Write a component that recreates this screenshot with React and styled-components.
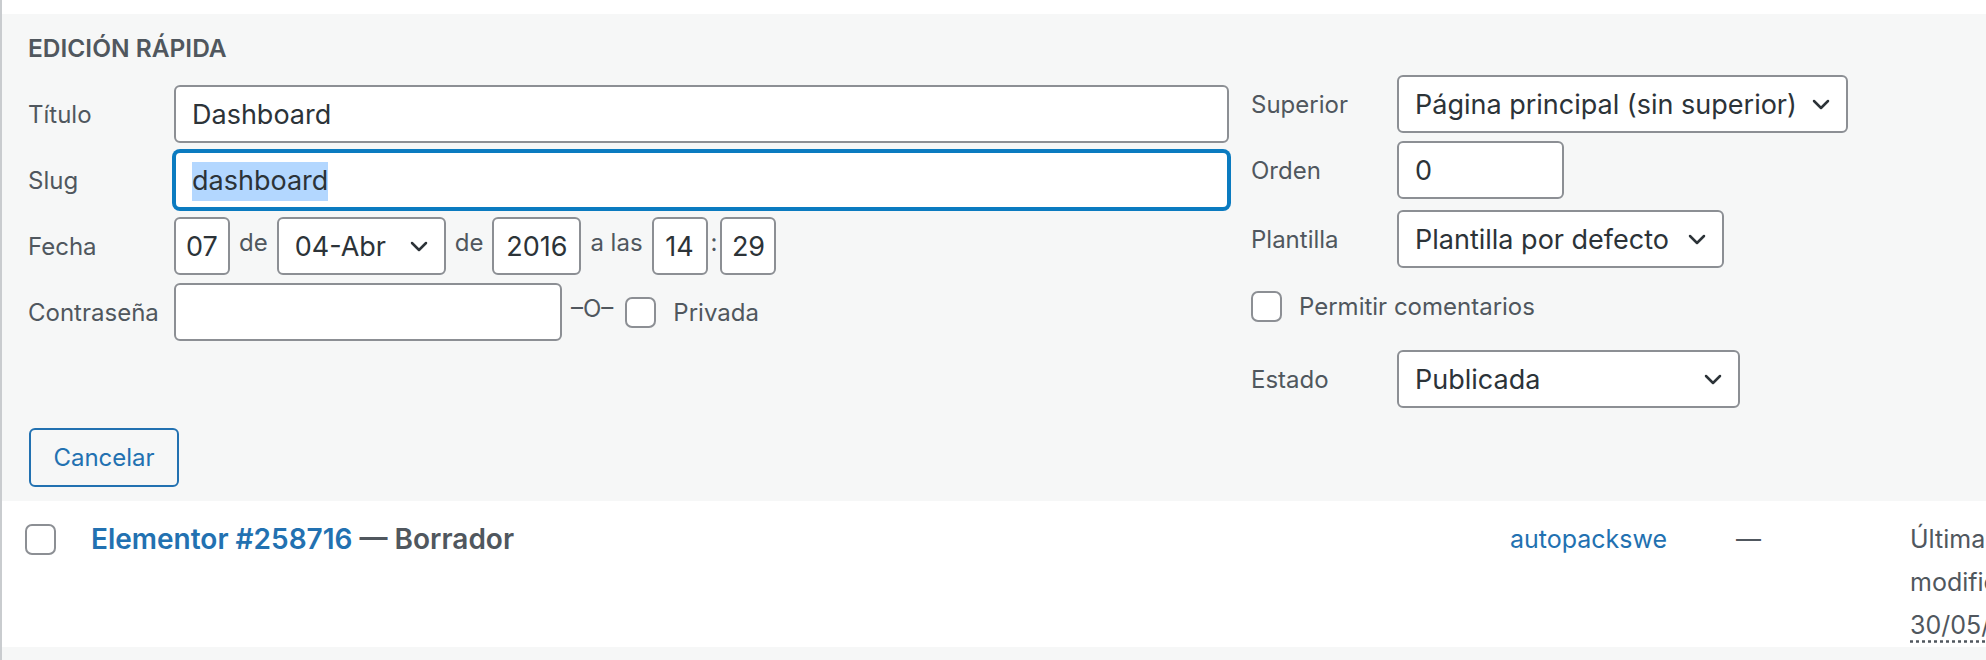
import styled, { createGlobalStyle } from 'styled-components'

const GlobalStyle = createGlobalStyle`
  html, body {
    margin: 0;
    padding: 0;
    background: #fff;
    overflow: hidden;
  }
  body {
    font-family: Inter, "Noto Sans", sans-serif;
    color: #50575e;
  }
`

const Table = styled.div`
  border-left: 2px solid #c9cccf;
  padding-top: 14px;
  background: #fff;
  height: 646px;
  overflow: hidden;
`

const Panel = styled.div`
  background: #f6f7f7;
  height: 487px;
  padding-left: 26px;
  box-sizing: border-box;
`

const Columns = styled.div`
  display: flex;
  gap: 22px;
`

const LeftCol = styled.div`
  width: 1201px;
  display: flex;
  flex-direction: column;
`

const RightCol = styled.div`
  width: 500px;
  padding-top: 61px;
  display: flex;
  flex-direction: column;
`

const Legend = styled.div`
  margin-top: 19px;
  height: 30px;
  line-height: 30px;
  font-size: 24.5px;
  font-weight: 600;
  text-transform: uppercase;
  color: #50575e;
`

const Field = styled.div`
  display: flex;
  align-items: center;
  height: ${p => p.$h || 58}px;
  margin-top: ${p => p.$mt}px;
`

const Label = styled.span`
  width: 146px;
  flex-shrink: 0;
  font-size: 24px;
  color: #50575e;
`

const Box = styled.div`
  box-sizing: border-box;
  height: 58px;
  width: ${p => (p.$w ? `${p.$w}px` : 'auto')};
  flex: ${p => (p.$grow ? 1 : 'none')};
  background: #fff;
  border: 2px solid ${p => (p.$focus ? '#0b7bc0' : '#8c8f94')};
  box-shadow: ${p => (p.$focus ? '0 0 0 2px #0b7bc0' : 'none')};
  border-radius: 6px;
  display: flex;
  align-items: center;
  justify-content: ${p => (p.$center ? 'center' : 'space-between')};
  padding: 0 ${p => (p.$center ? 0 : 16)}px;
  font-size: 27px;
  color: #2c3338;
  white-space: nowrap;
`

const Selected = styled.span`
  background: #b3d7ff;
  padding: 2px 0 4px;
`

const Sep = styled.span`
  font-size: 24px;
  color: #50575e;
  margin: 0 ${p => p.$m ?? 9}px;
  margin-top: -8px;
`

const Check = styled.span`
  display: inline-block;
  box-sizing: border-box;
  width: 31px;
  height: 31px;
  flex-shrink: 0;
  background: #fff;
  border: 2px solid #8c8f94;
  border-radius: 7px;
  margin-left: ${p => p.$ml || 0}px;
`

const CheckText = styled.span`
  font-size: 24px;
  color: #50575e;
  margin-left: 17px;
`

const Footer = styled.div`
  margin-top: 20px;
  display: flex;
`

const Button = styled.button`
  box-sizing: border-box;
  width: 150px;
  height: 59px;
  margin-left: 1px;
  background: #f6f7f7;
  border: 2px solid #2271b1;
  border-radius: 6px;
  color: #2271b1;
  font-family: inherit;
  font-size: 24px;
  padding: 0;
`

const Row = styled.div`
  display: flex;
  align-items: flex-start;
  height: 146px;
  overflow: hidden;
  padding-top: 17px;
  box-sizing: border-box;
  background: #fff;
  font-size: 25px;
  line-height: 43px;
`

const CheckCell = styled.div`
  width: 89px;
  padding-left: 23px;
  padding-top: 6px;
  box-sizing: border-box;
  flex-shrink: 0;
`

const Cell = styled.div`
  width: ${p => p.$w}px;
  flex-shrink: 0;
  color: ${p => (p.$link ? '#2271b1' : '#50575e')};
`

const TitleCell = styled(Cell)`
  font-size: 28px;
  font-weight: 600;
`

const TitleLink = styled.a`
  color: #2271b1;
  text-decoration: none;
`

const State = styled.span`
  color: #50575e;
`

const Abbr = styled.abbr`
  text-decoration: underline dotted;
  text-underline-offset: 6px;
`

const Stripe = styled.div`
  height: 20px;
  background: #f6f7f7;
`

const Chevron = () => (
  <svg width="18" height="11" viewBox="0 0 18 11" style={{ flexShrink: 0 }}>
    <path d="M2 2 L9 9 L16 2" fill="none" stroke="#2c3338" strokeWidth="2.5" strokeLinecap="round" strokeLinejoin="round" />
  </svg>
)

export default function App() {
  return (
    <>
      <GlobalStyle />
      <Table>
        <Panel>
          <Columns>
            <LeftCol>
              <Legend>Edición rápida</Legend>
              <Field $mt={22}>
                <Label>Título</Label>
                <Box $grow>Dashboard</Box>
              </Field>
              <Field $mt={8}>
                <Label>Slug</Label>
                <Box $grow $focus><span><Selected>dashboard</Selected></span></Box>
              </Field>
              <Field $mt={8}>
                <Label>Fecha</Label>
                <Box $w={56} $center>07</Box>
                <Sep>de</Sep>
                <Box $w={169}>04-Abr<Chevron /></Box>
                <Sep>de</Sep>
                <Box $w={89} $center>2016</Box>
                <Sep>a las</Sep>
                <Box $w={56} $center>14</Box>
                <Sep $m={3}>:</Sep>
                <Box $w={56} $center>29</Box>
              </Field>
              <Field $mt={8}>
                <Label>Contraseña</Label>
                <Box $w={388} />
                <Sep>–O–</Sep>
                <Check $ml={3} />
                <CheckText>Privada</CheckText>
              </Field>
            </LeftCol>
            <RightCol>
              <Field $mt={0}>
                <Label>Superior</Label>
                <Box $w={451}>Página principal (sin superior)<Chevron /></Box>
              </Field>
              <Field $mt={8}>
                <Label>Orden</Label>
                <Box $w={167}>0</Box>
              </Field>
              <Field $mt={11}>
                <Label>Plantilla</Label>
                <Box $w={327}>Plantilla por defecto<Chevron /></Box>
              </Field>
              <Field $mt={16} $h={45}>
                <Check />
                <CheckText>Permitir comentarios</CheckText>
              </Field>
              <Field $mt={21}>
                <Label>Estado</Label>
                <Box $w={343}>Publicada<Chevron /></Box>
              </Field>
            </RightCol>
          </Columns>
          <Footer>
            <Button>Cancelar</Button>
          </Footer>
        </Panel>
        <Row>
          <CheckCell>
            <Check />
          </CheckCell>
          <TitleCell $w={1419}>
            <TitleLink href="#">Elementor #258716</TitleLink>
            <State> — Borrador</State>
          </TitleCell>
          <Cell $w={226} $link>autopackswe</Cell>
          <Cell $w={174}>—</Cell>
          <Cell $w={170}>
            Última modificación
            <br />
            <Abbr>30/05/2024</Abbr>
          </Cell>
        </Row>
        <Stripe />
      </Table>
    </>
  )
}
